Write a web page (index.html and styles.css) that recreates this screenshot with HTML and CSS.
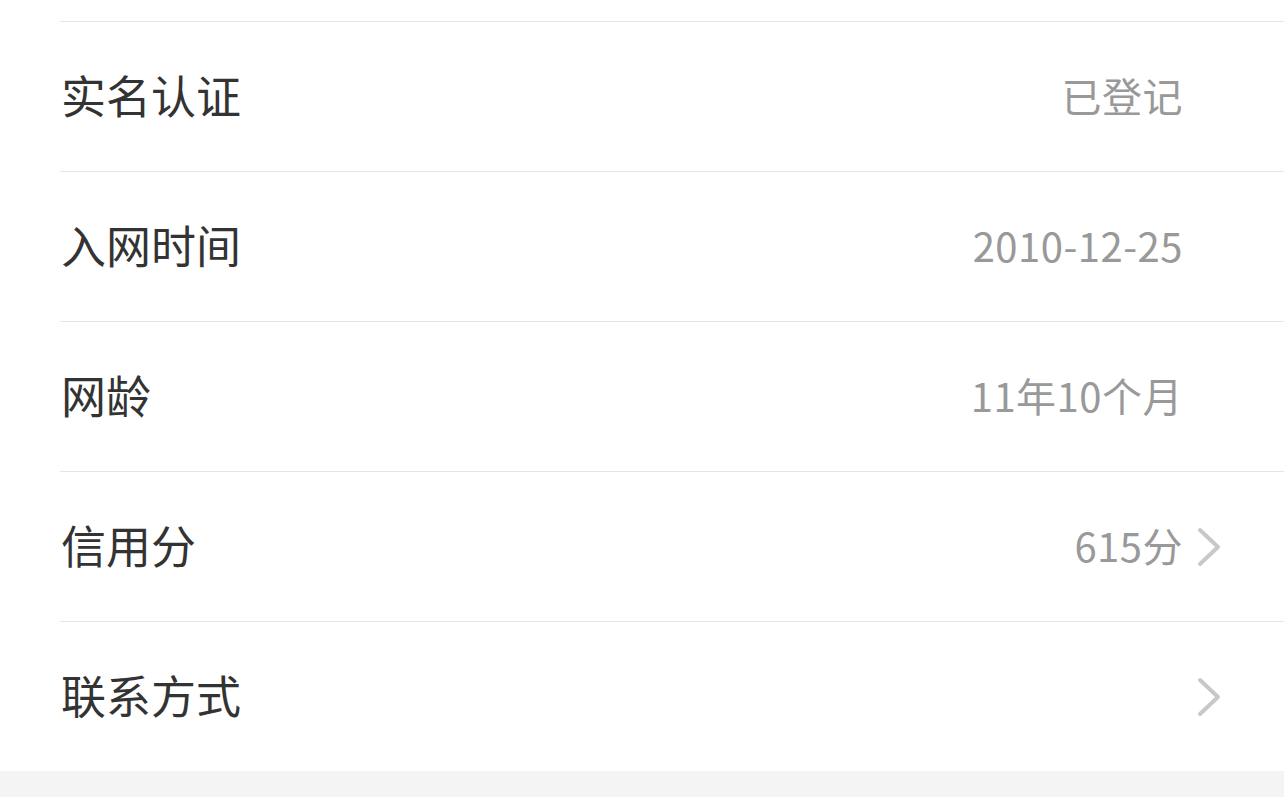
FILE: index.html
```html
<!DOCTYPE html>
<html lang="zh-CN">
<head>
    <meta charset="UTF-8">
    <meta name="viewport" content="width=device-width, initial-scale=1.0">
    <title>账户信息</title>
    <link rel="stylesheet" href="styles.css">
</head>
<body>

    <div class="info-list">
        <div class="list-top"></div>

        <div class="info-row">
            <span class="label">实名认证</span>
            <span class="value">已登记</span>
            <span class="arrow"></span>
        </div>

        <div class="info-row">
            <span class="label">入网时间</span>
            <span class="value">2010-12-25</span>
            <span class="arrow"></span>
        </div>

        <div class="info-row">
            <span class="label">网龄</span>
            <span class="value">11年10个月</span>
            <span class="arrow"></span>
        </div>

        <div class="info-row">
            <span class="label">信用分</span>
            <span class="value">615分</span>
            <span class="arrow">
                <svg viewBox="0 0 24 40" width="24" height="40"><polyline points="3,3 21,20 3,37" fill="none" stroke="#c8c8c8" stroke-width="4" stroke-linecap="round" stroke-linejoin="round"/></svg>
            </span>
        </div>

        <div class="info-row">
            <span class="label">联系方式</span>
            <span class="value"></span>
            <span class="arrow">
                <svg viewBox="0 0 24 40" width="24" height="40"><polyline points="3,3 21,20 3,37" fill="none" stroke="#c8c8c8" stroke-width="4" stroke-linecap="round" stroke-linejoin="round"/></svg>
            </span>
        </div>
    </div>

    <div class="footer-space"></div>

</body>
</html>
```

FILE: styles.css
```css
html, body {
    margin: 0;
    padding: 0;
}

body {
    font-family: "Noto Sans CJK SC", "Noto Sans", sans-serif;
    background-color: #f4f4f4;
}

.info-list {
    background: white;
    padding-left: 60px;
}

.list-top {
    height: 21px;
}

.info-row {
    display: grid;
    grid-template-columns: 1fr auto 24px;
    column-gap: 14px;
    align-items: center;
    height: 150px;
    box-sizing: border-box;
    border-top: 1px solid #e6e6e6;
    padding-right: 63px;
}

.label {
    font-size: 45px;
    color: #333333;
    margin-left: 1px;
    padding-bottom: 5px;
}

.value {
    font-size: 40px;
    color: #999999;
    text-align: right;
    letter-spacing: 0.5px;
    padding-bottom: 4px;
}

.arrow {
    display: flex;
    align-items: center;
    height: 40px;
}

.footer-space {
    height: 26px;
}
```
